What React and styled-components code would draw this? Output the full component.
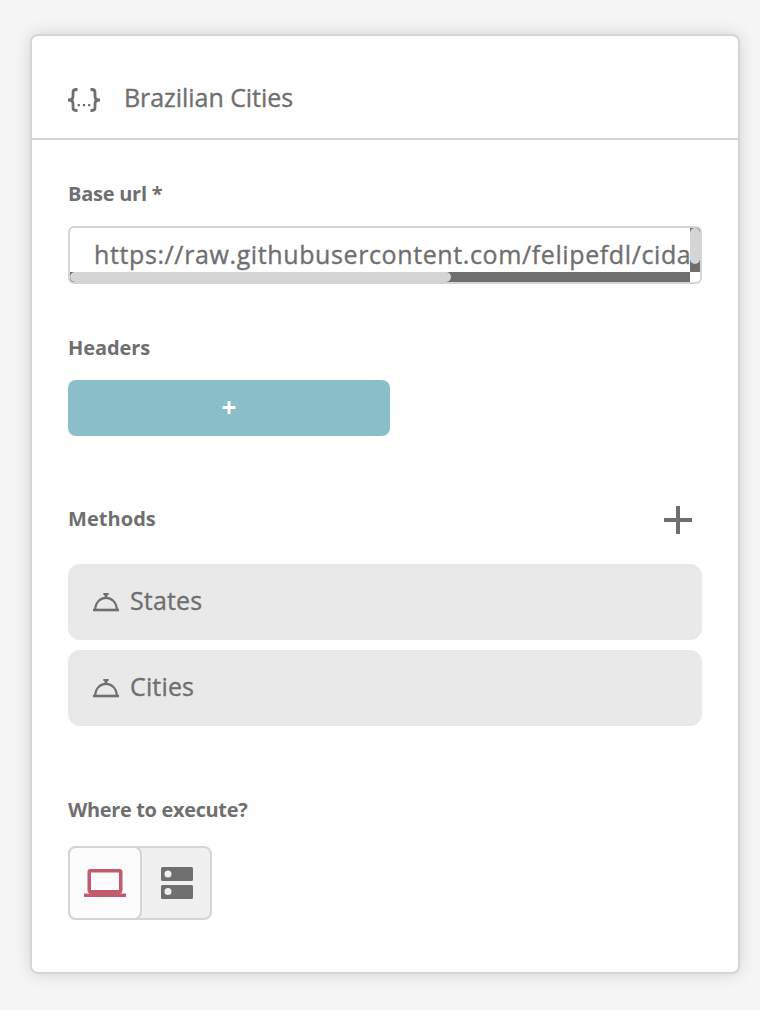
import React from "react";
import styled, { createGlobalStyle } from "styled-components";

const GlobalStyle = createGlobalStyle`
  * { box-sizing: border-box; }
  body {
    margin: 0;
    background: #f5f5f5;
    color: #6f6f6f;
    font-family: "Open Sans", "Noto Sans", sans-serif;
  }
`;

const Page = styled.main`
  height: 1010px;
  padding: 34px 20px 36px 30px;
`;

const Card = styled.article`
  height: 940px;
  border: 2px solid #d5d5d5;
  border-radius: 8px;
  background: #fff;
  box-shadow: 0 0 16px rgba(0, 0, 0, 0.14);
`;

const CardHeader = styled.header`
  display: flex;
  align-items: flex-end;
  gap: 24px;
  height: 104px;
  padding: 0 36px 25px;
  border-bottom: 2px solid #d5d5d5;
`;

const CardBody = styled.div`
  padding: 40px 36px 0;
`;

const Text = styled.span`
  display: block;
  font-size: ${(p) => p.$size || 25}px;
  line-height: 32px;
  font-weight: ${(p) => p.$weight || 400};
  letter-spacing: ${(p) => p.$spacing || 0}px;
  -webkit-text-stroke: ${(p) => (p.$weight ? 0 : 0.35)}px #6f6f6f;
  white-space: pre;
`;

const Label = styled(Text).attrs({ as: "h2", $size: 20, $weight: 700 })`
  margin: 0;
  line-height: 28px;
`;

const Section = styled.section`
  height: ${(p) => p.$height}px;
`;

const UrlField = styled.div`
  display: grid;
  grid-template: 44px 10px / 620px 10px;
  margin-top: 18px;
  border: 2px solid #d5d5d5;
  border-radius: 6px;
  overflow: hidden;
`;

const UrlText = styled.div`
  padding: 10px 0 0 24px;
`;

const Track = styled.div`
  background: #6f6f6f;
`;

const Thumb = styled.div`
  width: ${(p) => p.$width}px;
  height: ${(p) => p.$height}px;
  border-radius: 5px;
  background: #d5d5d5;
`;

const AddHeader = styled.button`
  display: flex;
  align-items: center;
  justify-content: center;
  width: 322px;
  height: 56px;
  margin-top: 18px;
  padding: 0 0 2px;
  border: 0;
  border-radius: 8px;
  background: #8abec8;
  color: #fff;
  font: 700 26px/54px "Open Sans", sans-serif;
`;

const MethodsTitle = styled.div`
  display: flex;
  justify-content: space-between;
  padding-right: 10px;
  height: 59px;
`;

const AddMethod = styled.div`
  padding-top: 1px;
`;

const Methods = styled.div`
  display: grid;
  gap: 10px;
`;

const Method = styled.div`
  display: flex;
  align-items: center;
  gap: 10px;
  height: 76px;
  padding: 0 24px 4px;
  border-radius: 12px;
  background: #e9e9e9;
`;

const BellSlot = styled.div`
  display: flex;
  padding-top: 3px;
`;

const Toggle = styled.div`
  display: flex;
  width: 144px;
  height: 74px;
  margin-top: 22px;
  border: 2px solid #d5d5d5;
  border-radius: 8px;
  background: #f0f0f0;
`;

const Option = styled.button`
  display: flex;
  flex: none;
  align-items: center;
  justify-content: center;
  width: ${(p) => (p.$active ? 74 : 68)}px;
  height: ${(p) => (p.$active ? 74 : 70)}px;
  margin: ${(p) => (p.$active ? "-2px 0 0 -2px" : "0")};
  padding: ${(p) => (p.$active ? "0" : "0 0 0 2px")};
  border: ${(p) => (p.$active ? "2px solid #d5d5d5" : "0")};
  border-radius: 8px;
  background: ${(p) => (p.$active ? "#fcfcfc" : "transparent")};
`;

const BracesIcon = () => (
  <svg width="32" height="25" viewBox="0 0 32 25" fill="none" stroke="#6f6f6f" strokeWidth="2.8">
    <path d="M9.5 1.5H8Q5 1.5 5 4.5V8.5Q5 12 0 12Q5 12 5 15.5V19.5Q5 22.5 8 22.5H9.5" />
    <path d="M22.5 1.5H24Q27 1.5 27 4.5V8.5Q27 12 32 12Q27 12 27 15.5V19.5Q27 22.5 24 22.5H22.5" />
    <path fill="#6f6f6f" stroke="none" d="M9.7 16h2.2v2.2H9.7zM14.9 16h2.2v2.2h-2.2zM20.1 16h2.2v2.2h-2.2z" />
  </svg>
);

const BellIcon = () => (
  <svg width="28" height="20" viewBox="0 0 28 20" fill="none">
    <path d="M1 18H27" stroke="#6f6f6f" strokeWidth="2.6" />
    <path d="M3.2 17.5C4 2 24 2 24.8 17.5" stroke="#6f6f6f" strokeWidth="2.2" />
    <path d="M11.3 1H16.7V2.6L15.3 3.8V5.5H12.7V3.8L11.3 2.6Z" fill="#6f6f6f" />
  </svg>
);

const PlusIcon = () => (
  <svg width="28" height="28" viewBox="0 0 28 28">
    <path d="M12 0H16V12H28V16H16V28H12V16H0V12H12Z" fill="#6f6f6f" />
  </svg>
);

const LaptopIcon = () => (
  <svg width="42" height="28" viewBox="0 0 42 28">
    <path
      fill="#c35b6d"
      fillRule="evenodd"
      d="M6.5 0H35.5Q38.5 0 38.5 3V21Q38.5 24 36 24.5H42V28H0V24.5H6Q3.5 24 3.5 21V3Q3.5 0 6.5 0ZM7 3.5V21H35V3.5Z"
    />
  </svg>
);

const ServerIcon = () => (
  <svg width="32" height="32" viewBox="0 0 32 32">
    <path
      fill="#6f6f6f"
      fillRule="evenodd"
      d="M1.5 0H30.5Q32 0 32 1.5V12.5Q32 14 30.5 14H1.5Q0 14 0 12.5V1.5Q0 0 1.5 0ZM7 3.5A3.5 3.5 0 1 0 7 10.5A3.5 3.5 0 1 0 7 3.5ZM1.5 18H30.5Q32 18 32 19.5V30.5Q32 32 30.5 32H1.5Q0 32 0 30.5V19.5Q0 18 1.5 18ZM7 21A3.5 3.5 0 1 0 7 28A3.5 3.5 0 1 0 7 21Z"
    />
  </svg>
);

export default function App() {
  return (
    <Page>
      <GlobalStyle />
      <Card>
        <CardHeader>
          <BracesIcon />
          <Text $spacing={-0.05}>Brazilian Cities</Text>
        </CardHeader>
        <CardBody>
          <Section $height={154}>
            <Label $spacing={-0.25}>Base url *</Label>
            <UrlField>
              <UrlText><Text $spacing={0.61}>https://raw.githubusercontent.com/felipefdl/cida</Text></UrlText>
              <Track><Thumb $width={10} $height={36} /></Track>
              <Track><Thumb $width={381} $height={10} /></Track>
            </UrlField>
          </Section>
          <Section $height={171}>
            <Label $spacing={-0.1}>Headers</Label>
            <AddHeader>+</AddHeader>
          </Section>
          <Section $height={291}>
            <MethodsTitle>
              <Label $spacing={0.05}>Methods</Label>
              <AddMethod><PlusIcon /></AddMethod>
            </MethodsTitle>
            <Methods>
              {["States", "Cities"].map((name) => (
                <Method key={name}>
                  <BellSlot><BellIcon /></BellSlot>
                  <Text $spacing={0.15}>{name}</Text>
                </Method>
              ))}
            </Methods>
          </Section>
          <Section $height={126}>
            <Label $spacing={-0.35}>Where to execute?</Label>
            <Toggle>
              <Option $active><LaptopIcon /></Option>
              <Option><ServerIcon /></Option>
            </Toggle>
          </Section>
        </CardBody>
      </Card>
    </Page>
  );
}
